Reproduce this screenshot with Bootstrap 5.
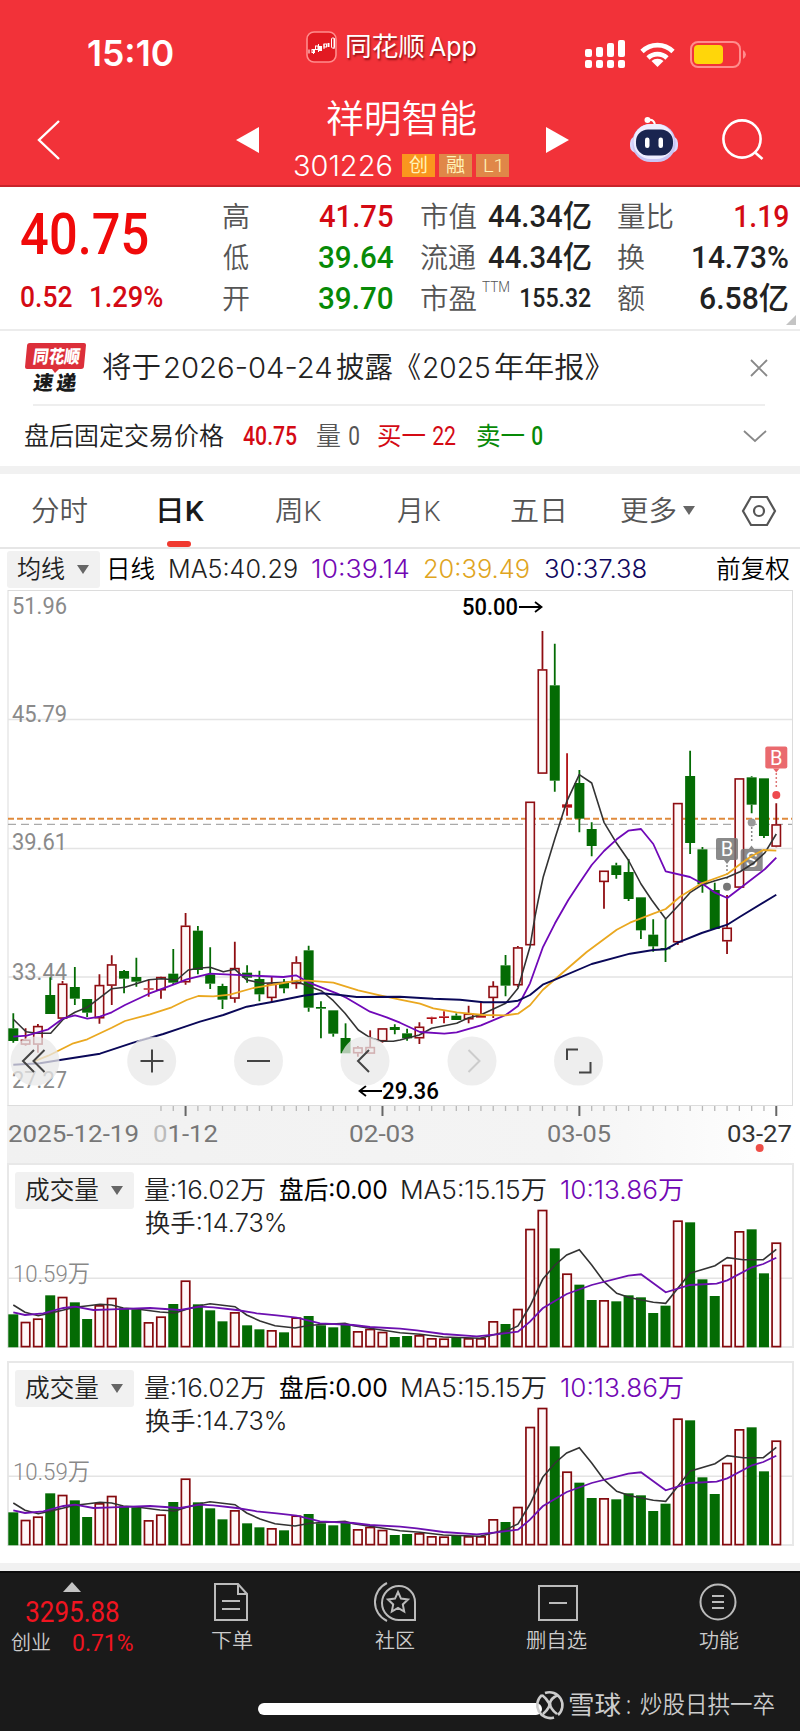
<!DOCTYPE html>
<html lang="zh-CN">
<head>
<meta charset="utf-8">
<meta name="viewport" content="width=device-width, initial-scale=1">
<title>祥明智能 301226</title>
<link href="https://cdn.jsdelivr.net/npm/bootstrap@5.3.0/dist/css/bootstrap.min.css" rel="stylesheet">
<style>
:root{--num:Roboto,"Noto Sans CJK SC",sans-serif;--ui:Inter,"Noto Sans CJK SC",sans-serif}
body{width:800px;margin:0;background:#fff;font-family:var(--num);color:#222;line-height:1;overflow-x:hidden}
svg{display:block;overflow:visible}
.ft{display:inline-block;white-space:nowrap;line-height:1;height:1em}
.ft>b{display:inline-block;font-weight:inherit;transform-origin:0 50%}
.lane{display:grid;align-items:center;justify-items:start}
.ui{font-family:var(--ui)}
.lt{font-weight:350}
.md{font-weight:500}
.up{color:#f00a0a}.up2{color:#d40a14}.dn{color:#078a07}.gy{color:#555}.pu{color:#7208b4}.ye{color:#e0a51e}.nv{color:#10085e}.dk{color:#222}
.s20{font-size:20px}.s22{font-size:22px}.s25{font-size:25px}.s28{font-size:28px}.s31{font-size:31px}
/* header */
.top-red{background:#f23239;color:#fff;height:187px;border-bottom:2px solid #c8242b}
.status{height:95px;padding-top:13px;grid-template-columns:88px 218px 41px 238px 55px 50px 1fr}
.navrow{height:90px;grid-template-columns:37px 199px 58px 251px 84px 93px 1fr}
.appname{text-shadow:1px 2px 2px rgba(90,0,0,.65)}
.tagbox{width:33px;height:23px;display:flex;align-items:center;justify-content:center;font-size:19px;color:#fff3b8;background:#e08748}
.tagbox.hot{background:#fa961e}
/* quote */
.quote{height:144px;border-bottom:2px solid #ececec;grid-template-columns:21px 202px 198px 197px 170px 1fr}
.qcol{display:flex;flex-direction:column;height:123px;width:170px;margin-top:-2px}
.qcol>div{height:41px;display:flex;align-items:center;justify-content:space-between}
.qcol .s28{margin-top:4px}
.fold{right:4px;bottom:4px}
/* notices */
.news{height:73px;grid-template-columns:25px 78px 648px 1fr}
.hr-soft{height:2px;background:#eee;margin:0 35px 0 33px}
.fixed-row{height:60px;grid-template-columns:25px 218px 74px 32px 29px 55px 44px 55px 212px 1fr}
.band{height:8px;background:#f1f1f1}
/* tabs */
.ktabs{height:75px;border-bottom:2px solid #e6e6e6;grid-template-columns:32px 127px 116px 122px 114px 110px 62px 59px 1fr;font-size:28px}
.ktabs .ft{margin-top:2px}
.ktabs .on{font-weight:500;color:#1a1a1a}
.ktabs .mark-on{position:absolute;left:8px;top:45px;width:24px;height:6px;border-radius:3px;background:#f0392f}
.marow{height:41px;grid-template-columns:7px 103px 60px 142px 113px 120px 172px 1fr}
.chip{height:37px;background:#f1f1f1;border-radius:3px;display:flex;align-items:center;padding:0 11px 0 10px;justify-content:space-between}
.chip1{width:93px}.chip2{width:119px}
.tri{width:0;height:0;border:6px solid transparent;border-top:9px solid #666;border-bottom:0}
/* chart panels */
.kchart{height:573px}
.vpanel{height:185px;margin:0 6px 13px 7px;border:2px solid #e8e8e8;position:relative}
.vhead{padding:7px 0 0 6px;display:grid;grid-template-columns:130px 135px 122px 159px 1fr;align-items:center}
.vhead2{padding:2px 0 0 136px;height:26px;display:flex;align-items:center}
.vplot{position:absolute;left:-9px;top:-2px;width:800px;height:185px}
/* bottom */
.dock{background:#1a1a1a;height:160px;color:#ccc;border-top:2px solid #0c0c0c}
.dock-index{width:150px;height:94px;padding:9px 0 0 11px;flex:none}
.docktabs{display:grid;grid-template-columns:164px 161px 162px 163px;flex:none}
.tabitem{display:flex;flex-direction:column;align-items:center;height:84px;padding-top:9px}
.tabitem svg{width:42px;height:40px}
.tabitem .ft{margin-top:9px}
.homebar{width:284px;height:12px;border-radius:6px;background:#fff;margin:8px 0 0 258px}
</style>
</head>
<body>
<header class="top-red">
  <div class="status lane">
    <i></i>
    <span class="ft ui" data-w="85" style="font-size:35px;font-weight:600;margin-top:-2px">15:10</span>
    <svg width="31" height="32" viewBox="0 0 31 32" style="margin-top:-15px"><rect x="1" y="1" width="29" height="30" rx="7" fill="#e21a22" stroke="#ff8d8d" stroke-width="1.6"/><g stroke="#fff" fill="none"><path d="M3 18.500v4M7.500 19v4M12.500 13v8M18 13v5M28 7v11"/><rect x="6" y="18.500" width="2.500" height="3"/><rect x="9.500" y="15" width="2.500" height="3.500"/><rect x="18" y="13" width="2.500" height="3"/><rect x="25.500" y="7" width="3" height="10" rx="1"/></g><path d="M13 15h3v5h-3zM21.500 12h2v4h-2z" fill="#fff"/></svg>
    <div class="d-flex ui appname" style="font-size:26px;margin-top:-14px;gap:5px"><span class="ft" data-w="77">同花顺</span><span class="ft" data-w="47">App</span></div>
    <svg width="41" height="28" viewBox="0 0 41 28" fill="#fff"><rect x="0" y="9" width="7" height="8" rx="2"/><rect x="11" y="7" width="7" height="10" rx="2"/><rect x="22" y="3" width="7" height="14" rx="2"/><rect x="33" y="0" width="7" height="17" rx="2"/><rect x="0" y="20" width="7" height="8" rx="2"/><rect x="11" y="20" width="7" height="8" rx="2"/><rect x="22" y="20" width="7" height="8" rx="2"/><rect x="33" y="20" width="7" height="8" rx="2"/></svg>
    <svg width="35" height="26" viewBox="0 0 35 26" fill="none" stroke="#fff" stroke-width="4.600"><path d="M2 10.500a22 22 0 0 1 31 0M8 17a13.500 13.500 0 0 1 19 0"/><path d="M17.500 26l-6-6a9 9 0 0 1 12 0z" fill="#fff" stroke="none"/></svg>
    <svg width="57" height="27" viewBox="0 0 57 27"><rect x="1" y="1" width="49" height="25" rx="7" fill="none" stroke="#ff8d8d" stroke-width="2"/><rect x="4" y="4" width="29" height="19" rx="4" fill="#ffd60a"/><path d="M53 9q3 2 3 4.500T53 18z" fill="#ff8d8d"/></svg>
  </div>
  <div class="navrow lane">
    <i></i>
    <svg width="24" height="42" viewBox="0 0 24 42" fill="none" stroke="#fff" stroke-width="2.400"><path d="M22 2L2 21l20 19"/></svg>
    <svg width="24" height="26"><path d="M0 13L23 0v26z" fill="#fff"/></svg>
    <div class="d-flex flex-column align-items-center" style="width:215px;margin-top:-3px">
      <span class="ft lt" data-w="149" style="font-size:38px">祥明智能</span>
      <div class="d-flex align-items-center" style="height:23px;margin-top:16px;gap:4px">
        <span class="ft ui lt" data-w="98" style="font-size:28px;margin-right:6px">301226</span>
        <span class="tagbox hot">创</span><span class="tagbox">融</span><span class="tagbox"><span class="ft lt" data-w="17">L1</span></span>
      </div>
    </div>
    <svg width="24" height="26"><path d="M24 13L1 0v26z" fill="#fff"/></svg>
    <svg width="50" height="47" viewBox="0 0 50 47" style="margin-top:-2px"><path d="M26 9Q25 3 19 4" fill="none" stroke="#fff" stroke-width="2"/><circle cx="18.500" cy="4" r="3" fill="#fff"/><rect x="1" y="20" width="48" height="17" rx="7" fill="#dcdafc"/><rect x="3.500" y="8" width="43" height="38" rx="18" fill="#c9c6f5"/><rect x="4.500" y="8" width="40" height="35" rx="17" fill="#efeeff"/><rect x="7" y="13.500" width="37" height="26" rx="12" fill="#1a2550"/><rect x="16" y="21.500" width="4.500" height="10.500" rx="2.200" fill="#fff"/><rect x="29.500" y="21.500" width="4.500" height="10.500" rx="2.200" fill="#fff"/></svg>
    <svg width="42" height="42" viewBox="0 0 42 42" fill="none" stroke="#fff" stroke-width="2.600"><circle cx="20" cy="20" r="18.600"/><path d="M32.500 33l8 7"/></svg>
  </div>
</header>

<section class="quote lane position-relative">
  <i></i>
  <div>
    <div style="height:57px;margin-top:2px"><span class="ft md up" data-w="127" style="font-size:57px">40.75</span></div>
    <div class="d-flex up2 md" style="font-size:29px;gap:19px;margin-top:20px"><span class="ft" data-w="51">0.52</span><span class="ft" data-w="72">1.29%</span></div>
  </div>
  <div class="qcol">
    <div><span class="ft lt gy s28" data-w="26">高</span><span class="ft md up2 s31" data-w="74">41.75</span></div>
    <div><span class="ft lt gy s28" data-w="26">低</span><span class="ft md dn s31" data-w="74">39.64</span></div>
    <div><span class="ft lt gy s28" data-w="26">开</span><span class="ft md dn s31" data-w="74">39.70</span></div>
  </div>
  <div class="qcol">
    <div><span class="ft lt gy s28" data-w="55">市值</span><span class="ft md s31" data-w="103">44.34亿</span></div>
    <div><span class="ft lt gy s28" data-w="55">流通</span><span class="ft md s31" data-w="103">44.34亿</span></div>
    <div><span class="ft lt gy s28" data-w="55">市盈</span><span class="ft lt gy me-auto" data-w="27" style="font-size:14px;margin:-22px 0 0 6px">TTM</span><span class="ft md s25" data-w="70">155.32</span></div>
  </div>
  <div class="qcol">
    <div><span class="ft lt gy s28" data-w="55">量比</span><span class="ft md up2 s31" data-w="53">1.19</span></div>
    <div><span class="ft lt gy s28" data-w="27">换</span><span class="ft md s31" data-w="95">14.73%</span></div>
    <div><span class="ft lt gy s28" data-w="27">额</span><span class="ft md s31" data-w="88">6.58亿</span></div>
  </div>
  <svg class="fold position-absolute" width="10" height="10"><path d="M10 0v10H0z" fill="#c4c4c4"/></svg>
</section>

<section>
  <div class="news lane">
    <i></i>
    <svg width="61" height="50" viewBox="0 0 61 50"><path d="M5 0h54q2 0 2 2l-2 21q0 3-3 3H34l-4 4-3-4H2q-2 0-2-2L2 3q0-3 3-3z" fill="#dc2f3a"/><g font-family="Noto Sans CJK SC, sans-serif" font-weight="900" transform="skewX(-8)"><text x="10" y="19.500" font-size="18" fill="#fff" textLength="47" lengthAdjust="spacingAndGlyphs">同花顺</text><text x="14" y="47" font-size="20" fill="#1a1a1a" textLength="20" lengthAdjust="spacingAndGlyphs">速</text><text x="37" y="47" font-size="20" fill="#1a1a1a" textLength="20" lengthAdjust="spacingAndGlyphs">递</text></g></svg>
    <div class="d-flex align-items-center ui lt dk" style="font-size:29px">
      <span class="ft" data-w="57">将于</span><span class="ft s28" data-w="166" style="margin-left:5px">2026-04-24</span><span class="ft" data-w="57" style="margin-left:5px">披露</span><span class="ft" data-w="12" style="margin-left:15px">《</span><span class="ft s28" data-w="65" style="margin-left:4px">2025</span><span class="ft" data-w="104" style="margin-left:6px">年年报》</span>
    </div>
    <svg width="16" height="16" stroke="#888" stroke-width="1.800"><path d="M0 0l16 16M16 0L0 16"/></svg>
  </div>
  <div class="hr-soft"></div>
  <div class="fixed-row lane">
    <i></i><span class="ft lt dk s25" data-w="199">盘后固定交易价格</span><span class="ft md up2 s25" data-w="54">40.75</span><span class="ft lt gy s25" data-w="23">量</span><span class="ft gy s25" data-w="10">0</span><span class="ft up2 s25" data-w="47">买一</span><span class="ft up2 s25" data-w="23">22</span><span class="ft dn s25" data-w="47">卖一</span><span class="ft md dn s25" data-w="10">0</span>
    <svg width="22" height="12" fill="none" stroke="#888" stroke-width="1.800"><path d="M0 1l11 10L22 1"/></svg>
  </div>
</section>
<div class="band"></div>

<nav class="ktabs lane gy lt">
  <i></i><span class="ft" data-w="55">分时</span>
  <span class="on position-relative"><span class="ft" data-w="45">日K</span><i class="mark-on"></i></span>
  <span class="ft" data-w="47">周K</span><span class="ft" data-w="44">月K</span><span class="ft" data-w="53">五日</span><span class="ft" data-w="55">更多</span><i class="tri"></i>
  <svg width="34" height="30" viewBox="0 0 34 30" fill="none" stroke="#555" stroke-width="2.200"><path d="M9 1h16l8 14-8 14H9L1 15z"/><circle cx="17" cy="15" r="5"/></svg>
</nav>

<div class="marow lane ui lt">
  <i></i><div class="chip chip1"><span class="ft s25 dk" data-w="48">均线</span><i class="tri"></i></div>
  <span class="ft s25 text-black" data-w="45">日线</span><span class="ft s25 dk" data-w="127">MA5:40.29</span><span class="ft s25 pu" data-w="97">10:39.14</span><span class="ft s25 ye" data-w="104">20:39.49</span><span class="ft s25 nv" data-w="101">30:37.38</span><span class="ft s25 text-black" data-w="73">前复权</span>
</div>

<svg class="kchart" id="kchart" width="800" height="573" viewBox="0 590 800 573"></svg>

<section class="vpanel">
  <svg class="vplot" viewBox="0 1163 800 185"></svg>
  <div class="vhead position-relative ui lt dk s25">
    <div class="chip chip2"><span class="ft" data-w="73">成交量</span><i class="tri"></i></div>
    <span class="ft" data-w="120">量:16.02万</span><span class="ft text-black" style="font-weight:400" data-w="107">盘后:0.00</span><span class="ft" data-w="144">MA5:15.15万</span><span class="ft pu" data-w="122">10:13.86万</span>
  </div>
  <div class="vhead2 position-relative ui lt dk s25"><span class="ft" data-w="140">换手:14.73%</span></div>
</section>
<section class="vpanel" style="margin-bottom:17px">
  <svg class="vplot" viewBox="0 1163 800 185"></svg>
  <div class="vhead position-relative ui lt dk s25">
    <div class="chip chip2"><span class="ft" data-w="73">成交量</span><i class="tri"></i></div>
    <span class="ft" data-w="120">量:16.02万</span><span class="ft text-black" style="font-weight:400" data-w="107">盘后:0.00</span><span class="ft" data-w="144">MA5:15.15万</span><span class="ft pu" data-w="122">10:13.86万</span>
  </div>
  <div class="vhead2 position-relative ui lt dk s25"><span class="ft" data-w="140">换手:14.73%</span></div>
</section>
<div class="band"></div>

<footer class="dock">
  <div class="d-flex">
    <div class="dock-index">
      <svg width="18" height="10" style="margin-left:52px"><path d="M9 0l9 10H0z" fill="#c4c4c4"/></svg>
      <div style="height:29px;margin:5px 0 0 15px"><span class="ft" data-w="93" style="font-size:30px;color:#f01420">3295.88</span></div>
      <div class="d-flex align-items-center" style="height:26px;margin-top:4px;gap:23px"><span class="ft lt s20" data-w="39">创业</span><span class="ft" data-w="60" style="font-size:24px;color:#f01420">0.71%</span></div>
    </div>
    <div class="docktabs">
      <div class="tabitem"><svg viewBox="0 0 42 40" fill="none" stroke="#bbb" stroke-width="2"><path d="M4 2h23l9 10v26H4zM27 2v10h9M11 19h18M11 27h18"/></svg><span class="ft s20 lt" data-w="40">下单</span></div>
      <div class="tabitem"><svg viewBox="0 0 42 40" fill="none" stroke="#bbb" stroke-width="2"><path d="M25 4a17 17 0 1 0 0 34h16V20A16 16 0 0 0 25 4zM13 1a21 21 0 0 0 0 38M24 10l3 6.600 7 .9-5.200 4.900 1.400 7.100-6.200-3.500-6.200 3.500 1.400-7.100L14 17.500l7-.9z"/></svg><span class="ft s20 lt" data-w="40">社区</span></div>
      <div class="tabitem"><svg viewBox="0 0 42 40" fill="none" stroke="#bbb" stroke-width="2"><path d="M4 4h38v34H4zM14 21h18"/></svg><span class="ft s20 lt" data-w="61">删自选</span></div>
      <div class="tabitem"><svg viewBox="0 0 42 40" fill="none" stroke="#bbb" stroke-width="2"><circle cx="20" cy="20" r="17.500"/><path d="M14 14h12M14 20h12M14 26h12"/></svg><span class="ft s20 lt" data-w="40">功能</span></div>
    </div>
  </div>
  <div class="d-flex align-items-center" style="height:38px;margin-top:19px">
    <div class="homebar"></div>
    <svg width="28" height="28" viewBox="0 0 28 28" fill="none" stroke="#ccc" stroke-width="2.600" style="margin-left:-6px"><path d="M9 2A13 13 0 0 1 22 24M18 26.500A13 13 0 0 1 6 4M6 4q4 3 7 8 2 4-6 11M22 4q-7 3-8 8 0 6 7 11"/></svg>
    <span class="ft" data-w="52" style="font-size:25px;margin-left:5px">雪球</span><span class="ft" data-w="3" style="font-size:25px;margin-left:6px">:</span><span class="ft lt" data-w="134" style="font-size:24px;margin-left:10px">炒股日拱一卒</span>
  </div>
</footer>

<script src="https://cdn.jsdelivr.net/npm/bootstrap@5.3.0/dist/js/bootstrap.bundle.min.js"></script>
<script>
const X = i => 13.3 + 12.306 * i;
const RED = '#8f0d12', GREEN = '#046b04';
const T = (x, y, w, s, size, fill, extra = '') => `<text x="${x}" y="${y}" font-size="${size}" fill="${fill}" textLength="${w}" lengthAdjust="spacingAndGlyphs" ${extra}>${s}</text>`;

// candles: colour, high, body top, body bottom, low
const a = v => 880 + v / 3, b = v => 600 + v / 3;
const candles = [
 ...[['g',400,445,483,488],['r',445,479,494,497],['r',432,438,494,518],['g',292,345,402,402],['r',303,311,416,416],['g',261,321,356,375],['g',357,357,398,411],['r',283,315,415,431],['r',226,253,317,375],['g',270,273,296,340],['g',233,291,305,320],['x',300,325,329,350],['r',290,291,331,356],['g',207,281,308,315],['r',99,137,307,314],['g',138,152,270,283],['g',202,283,311,327],['g',311,318,359,387],['r',185,264,356,368],['g',256,278,293,308],['g',272,297,343,364],['r',290,311,354,366],['g',297,309,325,340],['r',229,247,312,326],['g',197,211,383,395],['g',364,381,386,475],['g',391,391,461,470],['g',430,474,520,520],['r',498,502,520,530],['r',451,501,521,521],['r',445,445,484,488],['g',433,441,450,463],['g',446,460,475,482],['r',427,440,475,492],['x',410,412,417,431],['x',394,409,414,430],['g',400,407,420,420],['r',377,401,418,430],['x',367,407,413,413],['r',304,318,354,414],['g',225,256,317,349],['r',198,202,316,322]].map(c=>[c[0],a(c[1]),a(c[2]),a(c[3]),a(c[4])]),
 ['r',801.7,801.7,945.3,945.3],['r',b(93),b(208),b(521),b(521)],['g',b(131),b(256),b(542),b(575)],['x',b(460),b(613),b(623),b(647)],['g',b(510),b(549),b(656),b(697)],['g',b(667),b(687),b(738),b(769)],['r',b(812),b(812),b(846),908.7],['g',b(788),b(796),b(825),b(836)],['g',b(777),b(816),a(57),a(63)],['g',a(52),a(52),a(151),a(177)],['g',a(118),a(164),a(199),a(215)],['g',a(118),a(204),a(208),a(246)],['r',b(609),b(609),a(187),a(195)],['g',b(452),b(528),b(729),b(762)],['g',b(741),b(748),b(853),b(878)],['g',b(848),b(870),a(147),a(147)],['r',a(45),a(143),a(184),a(222)],['r',b(535),b(535),b(863),b(863)],['g',b(529),b(532),b(614),b(640)],['g',b(535),b(535),b(708),b(714)],['r',b(610),b(673),b(740),b(742)]
];
// each average is a list of windows: origin x, origin y, points in thirds of a pixel
const L = (...w) => w.flatMap(([ox, oy, s]) => s.split(' ').map(p => { const [x, y] = p.split(',').map(Number); return (ox + x / 3).toFixed(1) + ',' + (oy + y / 3).toFixed(1); })).join(' ');
const ma5 = L([0,880,'40,418 78,455 110,460 152,460 190,418 225,397 262,382 335,326 375,322 447,299 485,296 530,300 565,270 595,265 630,262 670,275 705,268 740,300 790,310 890,305 925,318 965,333 1000,362 1035,400 1075,450 1110,473 1147,484 1180,484'],[400,880,'0,480 58,465 95,445 170,430 206,413 243,404 317,370 354,325 390,200 405,110'],[400,600,'415,900 430,830 465,715 500,605 538,524 575,549 612,667 650,730 685,780 723,852 755,900'],[400,880,'797,117 845,66'],[400,600,'870,878 905,855 945,842 982,832 1020,815 1060,790 1095,758 1129,702']);
const ma10 = L([0,880,'40,470 80,467 145,448 190,415 225,406 262,416 300,410 335,397 375,375 447,341 530,310 560,298 630,281 780,288 850,291 888,286 925,307 1010,340 1040,354 1110,395 1160,412'],[400,880,'0,428 60,456 133,461 170,457 243,436 317,405 354,378 390,310 428,203 465,130'],[400,600,'505,900 538,850 575,795 612,753 650,718 685,692 723,687 760,732 797,814 870,831 905,850 945,878 982,894 1030,857 1095,807 1129,773']);
const ma20 = L([0,880,'100,545 145,527 220,490 262,478 335,443 375,423 450,403 515,382 560,360 595,348 640,349 690,344 760,324 850,309 890,302 925,302 1000,308 1075,331 1140,346'],[400,880,'0,359 60,371 100,385 170,397 250,405 317,406 354,401 390,376 428,330 465,298 560,216 650,149 690,128 760,101 797,87 840,50'],[400,600,'905,850 982,822 1020,793 1055,768 1090,750 1129,752']);
const ma30 = L([0,880,'40,554 120,550 180,540 300,521 400,488 490,462 540,445 600,425 670,405 740,380 820,365 910,347 965,340 1020,345 1070,351'],[400,880,'0,350 100,356 180,359 250,367 317,367 354,362 390,345 428,314 465,299 575,252 690,221 760,210 797,208 835,187 905,159 982,134 1020,110 1129,44']);

let s = `<defs><linearGradient id="ax"><stop offset="0" stop-color="#f1f1f1"/><stop offset=".7" stop-color="#f4f4f4"/><stop offset="1" stop-color="#fff"/></linearGradient></defs>
<rect x="7" y="1105" width="790" height="58" fill="url(#ax)"/><rect x="8" y="590.5" width="784.5" height="515" fill="#fff" stroke="#dcdcdc"/>
<path d="M8 719.500H792M8 848.500H792M8 977H792" stroke="#e4e4e4" stroke-width="1.500"/>`;
s += `<g font-family="Roboto, sans-serif">`;
[['51.96',614],['45.79',722],['39.61',850],['33.44',980],['27.27',1088]].forEach(([t,y]) => s += T(12, y, 55, t, 24, '#8a8a8a'));
s += `<path d="M8 818.800H792" stroke="#e08a3c" stroke-width="2" stroke-dasharray="6 3"/><path d="M8 824.300H792" stroke="#aaa" stroke-width="1.200" stroke-dasharray="8 5"/>`;
candles.forEach(([c,h,t,m,l], i) => {
  const x = X(i), col = c === 'g' ? GREEN : c === 'x' ? '#b01015' : RED;
  s += `<path d="M${x} ${h}V${t}M${x} ${m}V${l}" stroke="${col}" stroke-width="1.800"/>`;
  s += c === 'r' ? `<rect x="${x-4.2}" y="${t+.6}" width="8.400" height="${Math.max(1,m-t-1.2)}" fill="#fff8f8" stroke="${RED}" stroke-width="1.600"/>` : `<rect x="${x-5}" y="${t}" width="10" height="${m-t}" fill="${col}"/>`;
});
// trade markers
const mark = (x, y, t, col) => `<rect x="${x-11}" y="${y-11}" width="22" height="22" rx="2" fill="${col}" opacity=".85"/><text x="${x}" y="${y+7}" text-anchor="middle" font-size="20" fill="#fff">${t}</text>`;
s += mark(727,849,'B','#757575') + `<path d="M724 860h6l-3 4z" fill="#888"/><path d="M727 865v14" stroke="#888" stroke-width="1.500" stroke-dasharray="2 2"/><circle cx="727" cy="886.700" r="4" fill="#777"/>`;
s += mark(751.7,860,'S','#757575') + `<path d="M748.500 849.500h6l-3-4z" fill="#888"/><path d="M751.700 827v15" stroke="#888" stroke-width="1.500" stroke-dasharray="2 2"/><circle cx="751.700" cy="822.500" r="4" fill="#999"/>`;
s += mark(776.3,757.5,'B','#e65055') + `<path d="M773 768.500h6.500l-3.200 4z" fill="#e86468"/><path d="M776.300 773v15" stroke="#d77" stroke-width="1.500" stroke-dasharray="2 2"/><circle cx="776.300" cy="795" r="4" fill="#ee4a4e"/>`;
[[ma5,'#333',1.6],[ma10,'#7008b8',1.8],[ma20,'#eaa820',1.8],[ma30,'#0a0858',1.9]].forEach(([p,c,w]) => s += `<polyline points="${p}" fill="none" stroke="${c}" stroke-width="${w}" stroke-linejoin="round"/>`);
s += T(462,615,56,'50.00',24,'#000','font-weight="500"') + T(382,1099,57,'29.36',24,'#000','font-weight="500"');
s += `<path d="M519 607H541M535 602l6.500 5-6.500 5M382 1091H360M366 1086l-6.500 5 6.500 5" stroke="#000" stroke-width="1.800" fill="none"/>`;
// round tool buttons
[35,151.7,258.5,365,472,578.5].forEach(x => s += `<circle cx="${x}" cy="1061" r="24.500" fill="#e8e8e8" fill-opacity=".75"/>`);
s += `<g fill="none" stroke="#444" stroke-width="2"><path d="M34 1050L23 1061l11 11M44.500 1050L33.500 1061l11 11M140.500 1061h23M152 1049.500v23M247 1061h23M369 1050L358 1061l11 11"/><path d="M468.500 1050l11 11-11 11" stroke="#ccc"/><path d="M567 1060v-10.500h11M590.500 1062v10.500h-11.500"/></g>`;
for (let i = 12; i < 63; i++) { const big = i % 16 === 14; s += `<path d="M${X(i)} 1106v${big ? 10 : 5}" stroke="${big ? '#666' : '#b8b8b8'}" stroke-width="${big ? 2 : 1.3}"/>`; }
[[8,131,'2025-12-19'],[153,65,'<tspan fill="#bbb">0</tspan>1-12'],[349,66,'02-03'],[547,64,'03-05']].forEach(([x,w,t]) => s += T(x,1142,w,t,24,'#777'));
s += T(727,1142,65,'03-27',24,'#333') + `<circle cx="759.700" cy="1148" r="4" fill="#ee4e47"/></g>`;
document.getElementById('kchart').innerHTML = s;

// volume bars: colour and top edge
const vol = 'g493 r517 r507 g436 r442 g457 g507 r467 r445 g475 g478 r518 r501 g462 r393 g463 g481 g514 r488 g526 g538 r542 g547 r504 g498 g526 g532 g522 r545 r538 r547 g561 g558 r557 r566 r567 g564 r566 r566 r515 g522 r478 r238 r181 g295 r372 g404 g450 r452 g454 g436 g442 g489 g467 r213 g217 g388 g438 r346 r245 g238 g370 r279'.split(' ');
const v5 = L([0,1150,'40,465 75,487 115,497 150,490 225,472 265,467 300,463 335,465 370,474 410,477 480,486 525,489 560,478 595,468 630,461 705,470 740,495 780,513 825,527 885,534 930,526 1035,520 1060,527'],[400,1150,'0,548 60,553 130,561 240,565 317,545 354,528 390,468 428,388 465,345 500,315 538,299 575,345 612,395 650,430 690,443 725,450 760,457 797,460 870,370 945,347 982,323 1030,329 1090,329 1129,298']);
const v10 = L([0,1150,'40,487 75,495 130,490 190,474 225,470 280,480 335,478 450,474 540,480 600,470 640,472 710,480 770,490 830,496 890,503 960,520 1060,525 1110,531'],[400,1150,'0,536 50,541 130,552 230,559 290,553 354,545 390,515 428,475 500,432 575,405 685,377 723,373 797,427 870,405 950,401 982,391 1056,352 1090,342 1129,323']);
let v = `<path d="M8 1278.300H792" stroke="#e4e4e4" stroke-width="1.500"/><g font-family="Roboto, Noto Sans CJK SC, sans-serif" font-weight="350">${T(13,1282,77,'10.59万',24,'#888')}</g>`;
vol.forEach((d, i) => { const y = 1150 + d.slice(1) / 3, h = 1347.3 - y, x = X(i); v += d[0] === 'g' ? `<rect x="${x-5}" y="${y}" width="10" height="${h}" fill="${GREEN}"/>` : `<rect x="${x-4.2}" y="${y+.2}" width="8.400" height="${h-.9}" fill="#fff8f8" stroke="#84090d" stroke-width="1.700"/>`; });
v += `<polyline points="${v5}" fill="none" stroke="#333" stroke-width="1.600"/><polyline points="${v10}" fill="none" stroke="#6c10b0" stroke-width="1.800"/>`;
document.querySelectorAll('.vplot').forEach(e => e.innerHTML = v);

// stretch each label so that its inked width equals data-w
const cx = document.createElement('canvas').getContext('2d');
document.querySelectorAll('.ft').forEach(e => {
  const t = e.textContent, cs = getComputedStyle(e), w = +e.dataset.w;
  cx.font = `${cs.fontWeight} ${cs.fontSize} ${cs.fontFamily}`;
  const m = cx.measureText(t), k = w / (m.actualBoundingBoxLeft + m.actualBoundingBoxRight);
  e.innerHTML = '<b></b>'; e.firstChild.textContent = t; e.style.width = w + 'px';
  e.firstChild.style.transform = `translateX(${m.actualBoundingBoxLeft * k}px) scaleX(${k})`;
});
</script>
</body>
</html>
